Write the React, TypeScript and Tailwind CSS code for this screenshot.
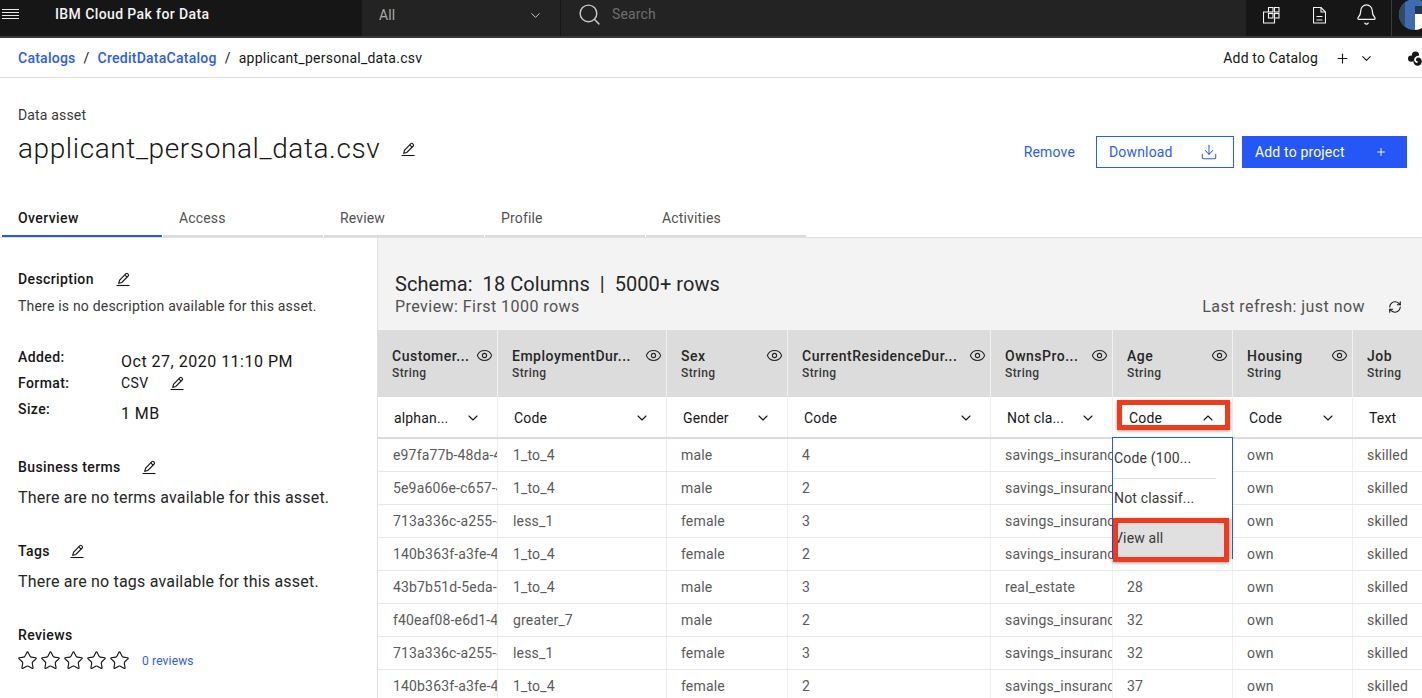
import { Bell, ChevronDown, ChevronUp, Download, Eye, Plus, RefreshCw, Search, Star } from 'lucide-react';

const COLUMNS = [
  { name: 'Customer...', type: 'alphan...', chevron: true },
  { name: 'EmploymentDur...', type: 'Code', chevron: true },
  { name: 'Sex', type: 'Gender', chevron: true },
  { name: 'CurrentResidenceDur...', type: 'Code', chevron: true },
  { name: 'OwnsPro...', type: 'Not cla...', chevron: true },
  { name: 'Age', type: 'Code', chevron: false },
  { name: 'Housing', type: 'Code', chevron: true },
  { name: 'Job', type: 'Text', chevron: false },
];

const ROWS = [
  ['e97fa77b-48da-4', '1_to_4', 'male', '4', 'savings_insurance', '', 'own', 'skilled'],
  ['5e9a606e-c657-4', '1_to_4', 'male', '2', 'savings_insurance', '', 'own', 'skilled'],
  ['713a336c-a255-4', 'less_1', 'female', '3', 'savings_insurance', '', 'own', 'skilled'],
  ['140b363f-a3fe-4', '1_to_4', 'female', '2', 'savings_insurance', '', 'own', 'skilled'],
  ['43b7b51d-5eda-4', '1_to_4', 'male', '3', 'real_estate', '28', 'own', 'skilled'],
  ['f40eaf08-e6d1-4', 'greater_7', 'male', '2', 'savings_insurance', '32', 'own', 'skilled'],
  ['713a336c-a255-4', 'less_1', 'female', '3', 'savings_insurance', '32', 'own', 'skilled'],
  ['140b363f-a3fe-4', '1_to_4', 'female', '2', 'savings_insurance', '37', 'own', 'skilled'],
];

const TABS = ['Overview', 'Access', 'Review', 'Profile', 'Activities'];

const GRID = 'grid grid-cols-[120px_169px_121px_203px_122px_120px_120px_70px]';

const Pencil = () => (
  <svg width="16" height="16" viewBox="0 0 16 16" fill="none" stroke="#161616" strokeWidth="1.1" className="shrink-0">
    <path d="M1.5 14.5h13" />
    <path d="M3.8 12.2l.7-2.9 6.4-6.6c.5-.5 1.2-.5 1.7 0l.6.6c.5.5.5 1.2 0 1.7l-6.4 6.5-3 .7z" />
    <path d="M9.8 3.9l2.3 2.3" />
  </svg>
);

const Apps = () => (
  <svg width="17" height="17" viewBox="0 0 17 17" fill="none" stroke="#f4f4f4" strokeWidth="1.1" className="shrink-0">
    <path d="M5 5H.5V16H11.5V11.5" />
    <rect x="5.5" y=".5" width="4.5" height="4.5" />
    <rect x="11.5" y=".5" width="4.5" height="4.5" />
    <rect x="5.5" y="6.5" width="4.5" height="4.5" />
    <rect x="11.5" y="6.5" width="4.5" height="4.5" />
  </svg>
);

const Doc = () => (
  <svg width="13" height="17" viewBox="0 0 13 17" fill="none" stroke="#f4f4f4" strokeWidth="1.1" className="ml-[33px] shrink-0">
    <path d="M.5.5H8L12.5 5V16H.5Z" />
    <path d="M8 .5V5H12.5" />
    <path d="M3.5 9.5h6M3.5 13h6" />
  </svg>
);

const CloudMark = () => (
  <svg width="14" height="15" viewBox="0 0 14 15" className="ml-[34px] shrink-0">
    <circle cx="7.5" cy="4" r="3.6" fill="#161616" />
    <circle cx="3.2" cy="7.6" r="3.2" fill="#161616" />
    <circle cx="9.6" cy="10.5" r="4.2" fill="#161616" />
    <path d="M14 5.6C10.5 4.6 7.2 6.2 7 8.6c-.1 1.5 1 2.6 2.6 2.6" fill="none" stroke="#fff" strokeWidth="1.7" />
  </svg>
);

const App = () => {
  return (
    <div className="h-[698px] w-[1422px] overflow-hidden bg-white text-[14px] tracking-[0.16px] text-[#161616] font-['Roboto',sans-serif]">
      {/* Top nav */}
      <header className="flex h-[38px] border-b-2 border-[#3a3a3a] bg-[#232323]">
        <div className="flex w-[362px] items-center bg-[#161616] pb-[8px]">
          <div className="ml-[2px] flex w-[17px] flex-col gap-[2px]">
            <span className="h-px bg-[#e8e8e8]" />
            <span className="h-px bg-[#e8e8e8]" />
            <span className="h-px bg-[#e8e8e8]" />
            <span className="h-px bg-[#e8e8e8]" />
          </div>
          <span className="ml-[36px] text-[14px] font-medium tracking-[0.4px] text-[#f4f4f4]">IBM Cloud Pak for Data</span>
        </div>
        <div className="flex w-[199px] items-center justify-between border-r border-[#161616] pr-[17px] pb-[6px] pl-[17px] text-[14px] text-[#a8a8a8]">
          <span>All</span>
          <ChevronDown size={15} strokeWidth={1.6} className="text-[#c6c6c6]" />
        </div>
        <div className="flex flex-1 items-center gap-[10px] pb-[8px] pl-[16px] text-[14px] text-[#6f6f6f]">
          <Search size={25} strokeWidth={1.4} className="text-[#c6c6c6]" />
          <span>Search</span>
        </div>
        <div className="flex w-[145px] items-center bg-[#161616] pb-[6px] pl-[17px]">
          <Apps />
          <Doc />
          <Bell size={23} strokeWidth={1.3} className="ml-[29px] -mt-[2px] shrink-0 text-[#f4f4f4]" />
        </div>
        <div className="relative w-[31px] flex-none overflow-hidden border-l border-[#3a3a3a] bg-[#161616]">
          <div className="absolute -top-[1px] left-[7px] h-[31px] w-[31px] overflow-hidden rounded-full bg-[#3f6cb0]">
            <div className="absolute top-0 left-0 h-[31px] w-[6px] bg-[#2f4d66]" />
            <div className="absolute top-[15px] left-[16px] h-[16px] w-[16px] bg-white" />
            <div className="absolute top-[7px] left-[16px] h-[8px] w-[16px] bg-[#23384f]" />
          </div>
        </div>
      </header>

      {/* Breadcrumb bar */}
      <div className="flex h-[40px] items-center justify-between border-b border-[#dcdcdc] pl-[18px]">
        <div className="flex items-center pt-[1px] text-[14px] tracking-[0.25px]">
          <span className="font-medium text-[#2b5cf5]">Catalogs</span>
          <span className="mx-[8px]">/</span>
          <span className="font-medium text-[#2b5cf5]">CreditDataCatalog</span>
          <span className="mx-[8px]">/</span>
          <span>applicant_personal_data.csv</span>
        </div>
        <div className="flex items-center pt-[2px]">
          <span>Add to Catalog</span>
          <Plus size={15} strokeWidth={1.8} className="ml-[17px]" />
          <ChevronDown size={15} strokeWidth={1.8} className="ml-[9px]" />
          <CloudMark />
        </div>
      </div>

      {/* Title row */}
      <div className="flex h-[124px] items-start justify-between pt-[29px] pr-[15px] pl-[18px]">
        <div>
          <div className="text-[14px] leading-[16px] text-[#393939]">Data asset</div>
          <div className="mt-[8px] flex items-center gap-[20px]">
            <h1 className="text-[28px] leading-[36px] font-light tracking-[0.6px]">applicant_personal_data.csv</h1>
            <Pencil />
          </div>
        </div>
        <div className="mt-[29px] flex items-center">
          <span className="mr-[21px] text-[#2b5cf5]">Remove</span>
          <button className="flex h-[32px] w-[138px] items-center justify-between border border-[#2b5cf5] pr-[15px] pl-[12px] text-[#2b5cf5]">
            Download
            <Download size={18} strokeWidth={1.4} />
          </button>
          <button className="ml-[8px] flex h-[32px] w-[165px] items-center justify-between bg-[#2457f5] pr-[20px] pl-[13px] text-white">
            Add to project
            <Plus size={12} strokeWidth={1.8} />
          </button>
        </div>
      </div>

      {/* Tabs */}
      <div className="flex h-[36px] border-b border-[#e0e0e0] pl-[2px]">
        {TABS.map((t, i) => (
          <div
            key={t}
            className={
              i === 0
                ? 'w-[160px] border-b-2 border-[#2457f5] pt-[6px] pl-[16px] font-medium tracking-[0.4px]'
                : 'ml-px w-[160px] border-b-2 border-[#dcdcdc] pt-[6px] pl-[16px] text-[#525252]'
            }
          >
            {t}
          </div>
        ))}
      </div>

      <div className="flex">
        {/* Left panel */}
        <aside className="h-[460px] w-[378px] flex-none border-r border-[#e0e0e0] pt-[32px] pl-[18px]">
          <div className="flex h-[18px] items-center gap-[21px] font-medium tracking-[0.4px]">
            Description <Pencil />
          </div>
          <p className="mt-[9px] leading-[18px] tracking-[0.2px] text-[#393939]">There is no description available for this asset.</p>

          <div className="mt-[29px] grid grid-cols-[103px_1fr] grid-rows-[26px_26px_26px] items-center font-medium tracking-[0.4px]">
            <div>Added:</div>
            <div className="mt-[10px] text-[16px] font-normal tracking-[0.5px]">Oct 27, 2020 11:10 PM</div>
            <div>Format:</div>
            <div className="flex items-center gap-[20px] font-normal">CSV <Pencil /></div>
            <div>Size:</div>
            <div className="mt-[10px] text-[16px] font-normal">1 MB</div>
          </div>

          <div className="mt-[36px] flex h-[18px] items-center gap-[20px] font-medium tracking-[0.4px]">
            Business terms <Pencil />
          </div>
          <p className="mt-[10px] text-[16px] leading-[24px] tracking-[0.2px] text-[#262626]">There are no terms available for this asset.</p>

          <div className="mt-[32px] flex h-[18px] items-center gap-[19px] font-medium tracking-[0.4px]">
            Tags <Pencil />
          </div>
          <p className="mt-[10px] text-[16px] leading-[24px] tracking-[0.2px] text-[#262626]">There are no tags available for this asset.</p>

          <div className="mt-[32px] flex h-[18px] items-center font-medium tracking-[0.4px]">Reviews</div>
          <div className="mt-[6px] -ml-[1px] flex items-center gap-[2px]">
            {[0, 1, 2, 3, 4].map((s) => (
              <Star key={s} size={21} strokeWidth={1.3} className="text-[#161616]" />
            ))}
            <span className="ml-[10px] text-[12px] text-[#2b5cf5]">0 reviews</span>
          </div>
        </aside>

        {/* Schema panel */}
        <section className="relative min-w-0 flex-1 overflow-hidden">
          <div className="h-[92px] bg-[#f3f3f3] pt-[33px] pr-[20px] pl-[17px]">
            <div className="text-[20px] leading-[26px] tracking-[0.05px] text-[#262626]">Schema:&nbsp; 18 Columns&nbsp; |&nbsp; 5000+ rows</div>
            <div className="flex items-center justify-between text-[16px] leading-[20px] tracking-[0.45px] text-[#525252]">
              <span>Preview: First 1000 rows</span>
              <span className="flex items-center gap-[23px]">
                Last refresh: just now
                <RefreshCw size={14} strokeWidth={1.8} className="text-[#161616]" />
              </span>
            </div>
          </div>

          <div className={`${GRID} h-[67px] bg-[#dcdcdc]`}>
            {COLUMNS.map((c) => (
              <div key={c.name} className="relative border-r border-[#f0f0f0] pt-[17px] pl-[14px] font-medium">
                <div className="text-[14px] leading-[18px] tracking-[0.5px] text-[#262626]">{c.name}</div>
                <div className="text-[12px] leading-[16px] tracking-[0.4px] text-[#393939]">String</div>
                {c.name !== 'Job' && (
                  <Eye size={17} strokeWidth={1.5} className="absolute top-[17px] right-[4px] text-[#262626]" />
                )}
              </div>
            ))}
          </div>

          <div className={`${GRID} h-[42px] border-b-2 border-[#dcdcdc]`}>
            {COLUMNS.map((c, i) => (
              <div key={c.name} className="flex items-center justify-between border-r border-[#efefef] pt-[2px] pr-[16px] pl-[16px]">
                <span>{c.type}</span>
                {c.chevron && <ChevronDown size={16} strokeWidth={1.6} />}
                {i === 5 && <ChevronUp size={16} strokeWidth={1.6} />}
              </div>
            ))}
          </div>

          {ROWS.map((row, r) => (
            <div key={r} className={`${GRID} h-[33px] border-b border-[#e8e8e8] text-[#5a5a5a]`}>
              {row.map((cell, i) => (
                <div key={i} className="flex items-center overflow-hidden border-r border-[#efefef] pl-[14px] whitespace-nowrap first:pl-[15px] nth-2:pl-[15px]">
                  {cell}
                </div>
              ))}
            </div>
          ))}

          {/* Open dropdown on the Age column */}
          <div className="absolute top-[199px] left-[734px] h-[122px] w-[121px] border border-[#2457f5] bg-white text-[#393939]">
            <div className="h-[40px] pt-[10px] pl-[1px]">Code (100...</div>
            <div className="mr-[16px] h-0 border-t border-[#dcdcdc]" />
            <div className="h-[40px] pt-[9px] pl-[1px]">Not classif...</div>
            <div className="h-[40px] bg-[#e0e0e0] pt-[9px] pl-[1px]">View all</div>
          </div>

          {/* Red annotation boxes */}
          <div className="absolute top-[162px] left-[739px] h-[30px] w-[113px] border-[5px] border-[#ef3b1c] shadow-[0_1px_3px_rgba(0,0,0,0.4)]" />
          <div className="absolute top-[280px] left-[735px] h-[44px] w-[116px] border-[5px] border-[#ef3b1c] shadow-[0_1px_3px_rgba(0,0,0,0.4)]" />
        </section>
      </div>
    </div>
  );
};

export default App;
